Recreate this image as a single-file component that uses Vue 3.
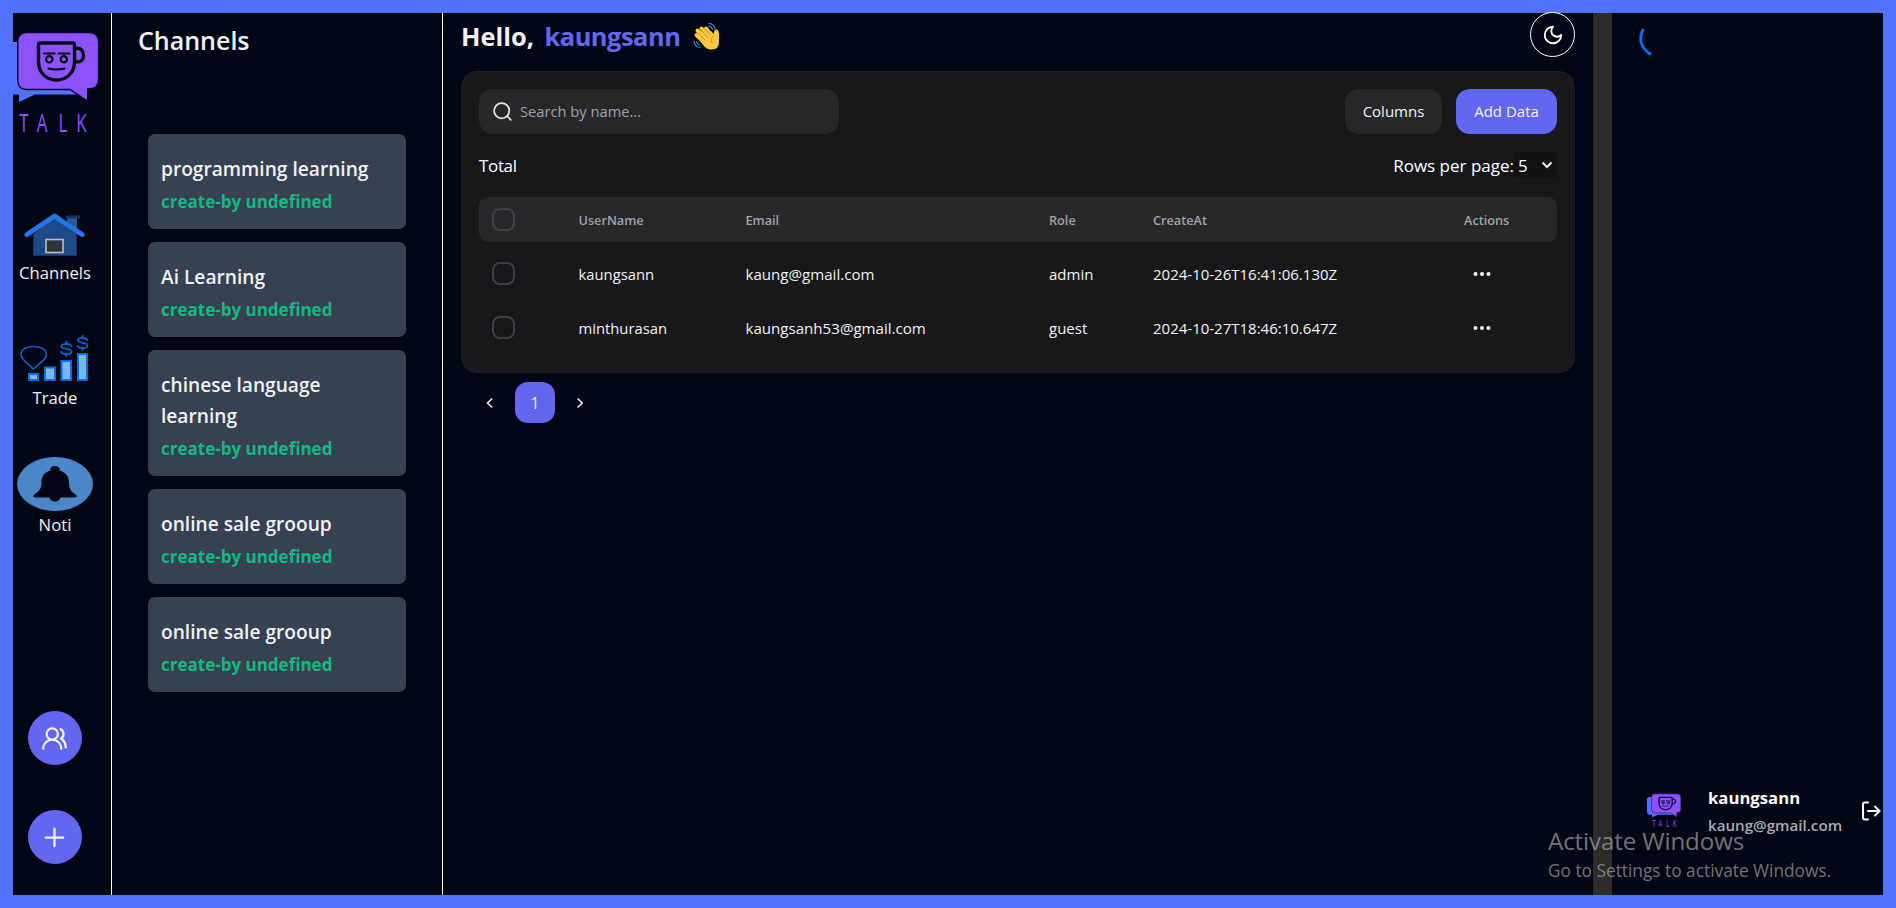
<script setup>
const channels = [
  'programming learning',
  'Ai Learning',
  'chinese language learning',
  'online sale grooup',
  'online sale grooup'
]
const rows = [
  { name: 'kaungsann', email: 'kaung@gmail.com', role: 'admin', at: '2024-10-26T16:41:06.130Z' },
  { name: 'minthurasan', email: 'kaungsanh53@gmail.com', role: 'guest', at: '2024-10-27T18:46:10.647Z' }
]
</script>

<template>
  <div class="app">
    <svg class="defs" width="0" height="0">
      <symbol id="talk-logo" viewBox="5 30 94 104" preserveAspectRatio="none" overflow="visible">
        <path fill="#5271ff" d="M13 42H80V94.5H35L19 102V94.5H13Q5 94.5 5 86V50Q5 42 13 42Z" />
        <path fill="#8c52ff" stroke="#0b0a2a" stroke-width="1.4" d="M27 32.500H89Q98.600 32.500 98.600 42V79Q98.600 88.800 89 88.800H87.700V101L70 89.500H27Q17.700 89.500 17.700 80V42Q17.700 32.500 27 32.500Z" />
        <g fill="none" stroke="#060818" stroke-width="3.400" stroke-linecap="round" stroke-linejoin="round">
          <path d="M40.500 43H72.500Q74.500 43 74.500 45V62C74.500 73 66 80 56.500 80S38.500 73 38.500 62V45Q38.500 43 40.500 43Z" />
          <path d="M75 48.500C81 47 83.500 51 83.500 55.500S80.500 63 75 61.500" />
          <g stroke-width="2.200"><path d="M44 53.500H54.500M58.500 53.500H69.500M48.500 68.500Q56.500 70.500 64.500 68.500" /><circle cx="49.300" cy="59.300" r="3.200" /><circle cx="63.800" cy="59.300" r="3.200" /></g>
        </g>
        <text class="logo-word" transform="translate(0 131.500) scale(.65 1)" x="29.500 56.500 90 117.500">TALK</text>
      </symbol>
    </svg>

    <aside class="rail">
      <svg class="logo"><use href="#talk-logo" /></svg>
      <div class="nav house">
        <svg width="62" height="46" viewBox="0 0 62 46">
          <path fill="#204a87" stroke="#163463" d="M9.500 22L30.500 5 52.500 22V43.500H9.500Z" />
          <path fill="#2a5a9c" d="M43 6H53V18L43 10Z" /><path fill="#16345f" d="M42 3.500H56V6.500H42Z" />
          <path fill="none" stroke="#2176e8" stroke-width="5" stroke-linecap="round" stroke-linejoin="round" d="M3 22.500L30.500 4 58 22.500" />
          <rect x="22" y="27.500" width="17" height="13" fill="#2e3436" stroke="#babdd0" stroke-width="1.600" />
        </svg>
        <span>Channels</span>
      </div>
      <div class="nav trade">
        <svg width="70" height="48" viewBox="0 0 70 48">
          <path fill="none" stroke="#0b5ed0" stroke-width="1.600" stroke-linejoin="round" d="M13.500 34C9 29 1 25 1 19.500 1 14 7 11.500 13.500 11.500S26.500 14 26.500 19.500C26.500 25 18 29 13.500 34Z" />
          <g fill="#7ab8f0" stroke="#0b6be6" stroke-width="2"><path d="M9 39H18V45H9ZM25 32.500H35V45H25ZM41.500 26H51V45H41.500ZM58 19H67V45H58Z" /></g>
          <g fill="none" stroke="#0b5ed0" stroke-width="1.800" stroke-linecap="round"><path d="M51.500 11C49 7.500 41.500 8.500 41.500 11.500S51.500 13 51.500 16.500 43 20 41 17M46.300 6.500V9M46.300 18.500V21" /><path d="M67.500 5C65 1.500 58 2.500 58 5.500S67.500 7 67.500 10.500 59.500 14 57.500 11M62.500 .8V3M62.500 12.500V15" /></g>
        </svg>
        <span>Trade</span>
      </div>
      <div class="nav noti">
        <svg width="76" height="54" viewBox="0 0 76 54">
          <ellipse cx="38" cy="27" rx="38" ry="27" fill="#4a86c8" />
          <path fill="#020617" d="M33.500 13.500C31.500 7.500 44.500 7.500 42.500 13.500 49 15.500 52 19.500 52 25.500 52 32 54 34.500 58 37 61 39.500 59.500 40.500 57 40.500H43.500C42.500 46 33.500 46 32.500 40.500H19C16.500 40.500 15 39.500 18 37 22 34.500 24.500 32 24.500 25.500 24.500 19.500 27 15.500 33.500 13.500Z" />
        </svg>
        <span>Noti</span>
      </div>
      <button class="round people"><svg width="27" height="27" viewBox="0 0 24 24"><path d="M18 21a8 8 0 0 0-16 0M22 20c0-3.370-2-6.500-4-8a5 5 0 0 0-.45-8.300" /><circle cx="10" cy="8" r="5" /></svg></button>
      <button class="round plus"><svg width="27" height="27" viewBox="0 0 24 24"><path d="M4.200 12H19.800M12 4.200V19.800" /></svg></button>
    </aside>

    <section class="channels">
      <h2>Channels</h2>
      <ul>
        <li v-for="(c, i) in channels" :key="i"><p>{{ c }}</p><small>create-by undefined</small></li>
      </ul>
    </section>

    <main>
      <header>
        <h1>Hello, <b>kaungsann</b></h1>
        <svg class="wave" width="28" height="29" viewBox="0 0 28 29">
          <g stroke="#ffc83d" stroke-width="4" stroke-linecap="round" fill="none"><path d="M12 21L3.500 13M14 18L4.500 8.500M16 15L8.500 6.500M18 13L13 6.500" /></g>
          <path fill="#ffc83d" d="M6 17L18 9 21 12Q20.500 8 23 7.500 26 7.500 26 12V20Q26 27.500 19 27.500 14 28 10 23Z" />
          <path fill="none" stroke="#c98a1b" stroke-width=".9" stroke-linecap="round" d="M5.500 11.500L12 18M7.500 7.500L14.500 15M12 7L17.500 13M21 13Q17 16 19 21" />
          <path fill="none" stroke="#28a5b8" stroke-width="1.100" stroke-linecap="round" d="M16 1.500Q21.500 2 22 7.500M15.500 4Q19 4.500 19.500 7.500M1 19Q1.500 25 7 25.500M3.500 19.500Q4 22.500 7 23" />
        </svg>
        <button class="moon"><svg width="22" height="22" viewBox="0 0 24 24"><path d="M12 3a6 6 0 0 0 9 9 9 9 0 1 1-9-9Z" /></svg></button>
      </header>

      <div class="card">
        <div class="tools">
          <div class="search"><svg width="19" height="19" viewBox="0 0 24 24"><circle cx="11" cy="11" r="9.600" /><path d="M18 18L22.500 22.500" /></svg><span>Search by name...</span></div>
          <button class="btn">Columns</button><button class="btn primary">Add Data</button>
        </div>
        <div class="meta"><span class="total">Total</span><span class="rpp">Rows per page:</span><span class="select"><i>5</i><svg width="12" height="8" viewBox="0 0 12 8"><path d="M1.500 1.500L6 6L10.500 1.500" /></svg></span></div>
        <div class="row head"><i class="check" /><span>UserName</span><span>Email</span><span>Role</span><span>CreateAt</span><span>Actions</span></div>
        <div v-for="r in rows" :key="r.name" class="row">
          <i class="check" /><span class="name">{{ r.name }}</span><span class="email">{{ r.email }}</span><span>{{ r.role }}</span><span>{{ r.at }}</span>
          <svg class="dots" width="18" height="6" viewBox="0 0 18 6"><circle cx="2.500" cy="3" r="2" /><circle cx="9" cy="3" r="2" /><circle cx="15.500" cy="3" r="2" /></svg>
        </div>
      </div>

      <nav class="pages">
        <svg width="8" height="12" viewBox="0 0 8 12"><path d="M6.200 1.500L1.500 6L6.200 10.500" /></svg>
        <button>1</button>
        <svg width="8" height="12" viewBox="0 0 8 12"><path d="M1.500 1.500L6.200 6L1.500 10.500" /></svg>
      </nav>
    </main>

    <div class="divider" />
    <aside class="right">
      <svg class="spinner" width="14" height="28" viewBox="0 0 14 28"><path d="M5 2C1 9 1.500 19 12 26" /></svg>
      <div class="user">
        <svg class="mini"><use href="#talk-logo" /></svg>
        <div class="who"><strong>kaungsann</strong><span>kaung@gmail.com</span></div>
        <svg class="logout" width="20" height="20" viewBox="0 0 20 20"><path d="M7 1.500H4Q2 1.500 2 3.500V16.500Q2 18.500 4 18.500H7M7 10H18M14 5.500L18.500 10L14 14.500" /></svg>
      </div>
    </aside>
    <div class="watermark"><p>Activate Windows</p><span>Go to Settings to activate Windows.</span></div>
  </div>
</template>

<style>
body { margin: 0; background: #020617; overflow: hidden; }
</style>

<style scoped>
* { box-sizing: border-box; margin: 0; padding: 0; }
button { border: 0; font: inherit; color: inherit; background: none; }
i { font-style: normal; }
svg { display: block; flex: none; }
.app { width: 1896px; height: 908px; border: 13px solid #5271ff; background: #010615; color: #f1f1f1; display: flex; font: 17px/27px "Open Sans", "Noto Sans", sans-serif; position: relative; white-space: nowrap; }
.defs { position: absolute; }
.logo-word { font: 400 26px "Open Sans", sans-serif; fill: #8c52ff; }
.rail { width: 99px; flex: none; border-right: 1px solid #fff; }
.logo { width: 94px; height: 104px; margin: 17px 0 0 -8px; overflow: visible; }
.nav { width: 84px; display: flex; flex-direction: column; align-items: center; font-size: 16.700px; }
.nav span { margin-top: 1px; }
.house { margin-top: 78px; }
.trade { margin-top: 49px; }
.noti { margin-top: 46px; }
.noti span { margin-top: 0; }
.round { display: flex; align-items: center; justify-content: center; width: 54px; height: 54px; border-radius: 50%; background: #6366f1; margin-left: 15px; padding-right: 1px; }
.round path, .round circle { fill: none; stroke: #f1f1f1; stroke-width: 2; stroke-linecap: round; }
.people { margin-top: 173px; }
.plus { margin-top: 45px; }
.channels { width: 331px; flex: none; border-right: 1px solid #fff; }
h2 { font-size: 25px; line-height: 36px; font-weight: 600; margin: 9px 0 0 26px; }
ul { list-style: none; margin: 76px 36px 0; display: flex; flex-direction: column; gap: 13.500px; }
li { background: #374151; border-radius: 7px; padding: 20px 13px 14px; white-space: normal; }
li p { font-size: 19.150px; line-height: 31px; font-weight: 600; margin-bottom: 2.500px; }
li small { display: block; font-size: 17px; font-weight: 700; color: #10b981; line-height: 27px; }
main { width: 1150px; flex: none; padding: 0 18px; }
header { height: 58px; display: flex; }
h1 { font-size: 25.400px; line-height: 36px; margin-top: 5px; font-weight: 700; }
h1 b { font-weight: 700; color: #6366f1; letter-spacing: -.47px; margin-left: 4px; }
.wave { margin: 9px 0 0 13px; }
.moon { width: 45px; height: 45px; border: 1px solid #fff; border-radius: 50%; margin: -1px 0 0 auto; display: flex; align-items: center; justify-content: center; }
.moon path { fill: none; stroke: #fff; stroke-width: 2; stroke-linejoin: round; }
.card { height: 302px; border-radius: 16px; background: #18181b; border: 1px solid #1e1e21; padding: 17px; }
.tools { display: flex; height: 45px; font-size: 15px; }
.search { width: 360px; background: #27272a; border-radius: 14px; display: flex; align-items: center; padding-left: 14px; color: #a1a1aa; margin-right: auto; font-size: 14.700px; }
.search svg { margin-right: 8px; fill: none; stroke: #e4e4e7; stroke-width: 2.200; stroke-linecap: round; }
.btn { width: 97px; background: #27272a; border-radius: 14px; }
.primary { width: 101px; margin-left: 14px; background: #6366f1; }
.meta { display: flex; align-items: center; height: 26px; margin: 18px 0 19px; color: #fff; }
.total { letter-spacing: -.35px; }
.rpp { margin-left: auto; }
.select { width: 43px; height: 26px; background: #121212; display: flex; align-items: center; justify-content: space-between; padding: 0 4px; }
.select path, .pages path { fill: none; stroke: #f1f1f1; stroke-width: 2; }
.row { display: grid; grid-template-columns: 86.500px 167px 303.500px 104px 311px auto; align-items: center; height: 54px; font-size: 15px; padding-left: 13px; }
.head { height: 45px; margin-bottom: 5px; padding-top: 2px; background: #27272a; border-radius: 9px; font-size: 12.700px; font-weight: 600; color: #a1a1aa; }
.name { font-size: 14.800px; }
.email { font-size: 15.100px; }
.check { width: 23px; height: 23px; border: 2px solid #3f3f46; border-radius: 8px; margin-top: -2px; }
.head .check { margin-top: -3px; }
.dots { fill: #fff; margin-left: 9px; }
.pages { display: flex; align-items: center; margin-top: 9px; padding-left: 25px; height: 41px; }
.pages path { stroke-width: 1.500; }
.pages button { width: 40px; height: 41px; border-radius: 13px; background: #6366f1; font-size: 15.500px; margin: 0 21px; padding-top: 1px; }
.divider { width: 19px; flex: none; background: #2c2c2c; }
.right { flex: 1; display: flex; flex-direction: column; justify-content: space-between; }
.spinner { margin: 15px 0 0 26px; fill: none; stroke: #0072f5; stroke-width: 2.800; stroke-linecap: round; }
.user { display: flex; height: 114px; padding-left: 35px; }
.mini { width: 34px; height: 35px; margin-top: 12px; overflow: visible; }
.who { margin: 3px 0 0 27px; width: 152px; display: flex; flex-direction: column; }
.who strong { font-size: 16.700px; color: #fff; line-height: 28px; }
.who span { font-size: 15.150px; font-weight: 600; color: #a9abb1; line-height: 27px; }
.logout { margin: 20px 0 0 1px; fill: none; stroke: #fff; stroke-width: 2; stroke-linecap: round; }
.watermark { position: absolute; left: 1535px; top: 809px; color: rgba(170, 170, 170, .68); }
.watermark p { font-size: 24.200px; letter-spacing: -.15px; line-height: 38px; }
.watermark span { font-size: 17.300px; line-height: 22px; display: block; }
</style>
